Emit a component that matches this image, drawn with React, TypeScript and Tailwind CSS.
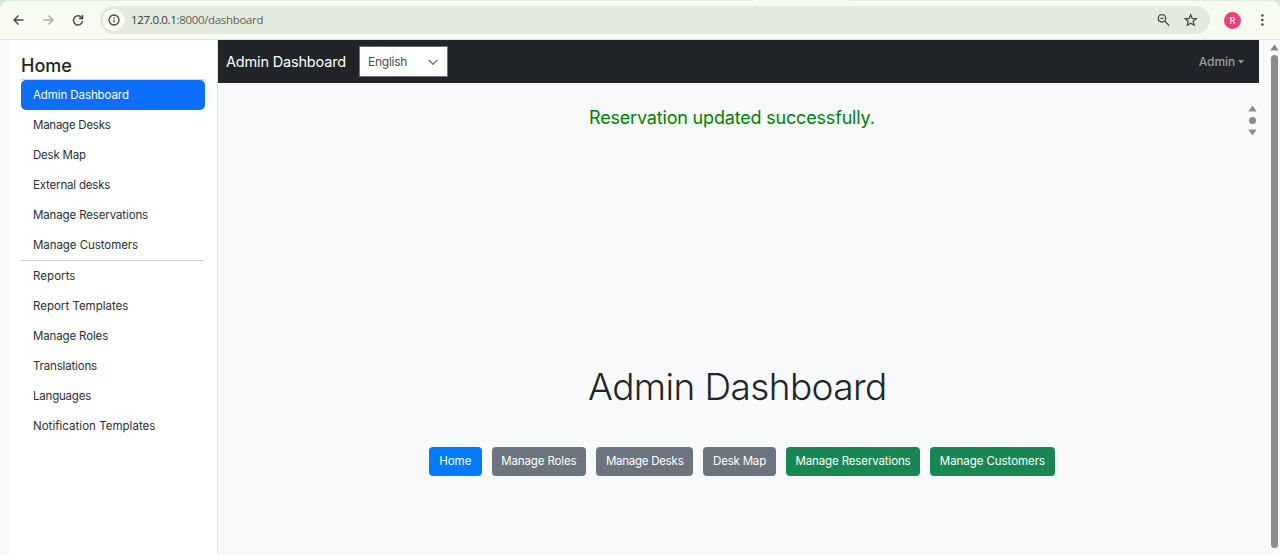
import React from 'react';

type NavItem = { label: string; track: string; active?: boolean };

const primaryNav: NavItem[] = [
  { label: 'Admin Dashboard', track: 'tracking-[-0.09px]', active: true },
  { label: 'Manage Desks', track: 'tracking-[-0.25px]' },
  { label: 'Desk Map', track: 'tracking-[-0.2px]' },
  { label: 'External desks', track: 'tracking-[-0.18px]' },
  { label: 'Manage Reservations', track: 'tracking-[-0.13px]' },
  { label: 'Manage Customers', track: 'tracking-[-0.06px]' },
];

const secondaryNav: NavItem[] = [
  { label: 'Reports', track: 'tracking-[0.05px]' },
  { label: 'Report Templates', track: 'tracking-[0px]' },
  { label: 'Manage Roles', track: 'tracking-[-0.14px]' },
  { label: 'Translations', track: 'tracking-[-0.17px]' },
  { label: 'Languages', track: 'tracking-[-0.2px]' },
  { label: 'Notification Templates', track: 'tracking-[0.03px]' },
];

const actions = [
  { label: 'Home', style: 'w-[52.5px] bg-[#007bff]' },
  { label: 'Manage Roles', style: 'w-[94.7px] bg-[#6c757d] tracking-[-0.14px]' },
  { label: 'Manage Desks', style: 'w-[97px] bg-[#6c757d] tracking-[-0.25px]' },
  { label: 'Desk Map', style: 'w-[72.7px] bg-[#6c757d] tracking-[-0.2px]' },
  { label: 'Manage Reservations', style: 'w-[134.3px] bg-[#198754] tracking-[-0.13px]' },
  { label: 'Manage Customers', style: 'w-[124.4px] bg-[#198754] tracking-[-0.06px]' },
];

function NavLink({ label, track, active }: NavItem) {
  return (
    <a
      className={`flex h-[30px] items-center rounded-[5px] pt-0.5 pl-3 text-[11.5px] whitespace-nowrap ${track} ${
        active ? 'bg-[#0d6efd] text-white' : 'text-[#2b3035]'
      }`}
    >
      {label}
    </a>
  );
}

function BrowserBar() {
  return (
    <div className="h-10 shrink-0 bg-[#d5ecd0]">
      <div className="relative flex h-10 items-center rounded-t-[9px] border-t border-b border-t-[#deefd9] border-b-[#e2e7db] bg-[#f8fbf1] text-[#454a44]">
        <div className="absolute -top-px left-[754px] h-px w-24 bg-[#f8fbf1]" />
        <svg className="ml-3 h-3.5 w-3.5" viewBox="0 0 14 14" fill="none" stroke="currentColor" strokeWidth="1.4">
          <path d="M11.5 7H2.3M6.5 2.6 2.1 7l4.4 4.4" />
        </svg>
        <svg className="ml-4 h-3.5 w-3.5 text-[#a9aea6]" viewBox="0 0 14 14" fill="none" stroke="currentColor" strokeWidth="1.4">
          <path d="M1.5 7h9.2M6.5 2.6 10.9 7l-4.4 4.4" />
        </svg>
        <svg className="ml-[15px] h-3.5 w-3.5" viewBox="0 0 14 14" fill="none" stroke="currentColor" strokeWidth="1.4">
          <path d="M11.1 5.2A4.6 4.6 0 1 0 11.6 7.9" />
          <path d="M11.6 1.9v3.6H8" />
        </svg>
        <div className="ml-[15px] flex h-7 w-[1110px] items-center rounded-full bg-[#e3ebdf]">
          <div className="ml-[3px] flex h-[22px] w-[22px] items-center justify-center rounded-full bg-[#f8fbf1]">
            <svg className="h-3 w-3" viewBox="0 0 12 12" fill="none" stroke="currentColor" strokeWidth="1.3">
              <circle cx="6" cy="6" r="5" />
              <path d="M6 5.4v3.1M6 3.2v1.2" />
            </svg>
          </div>
          <span className="ml-1.5 flex-1 font-['Open_Sans',sans-serif] text-[11.5px] tracking-[-0.33px] text-[#5b6359]">
            <span className="text-[#343a33]">127.0.0.1</span>:8000/dashboard
          </span>
          <svg className="h-3.5 w-3.5" viewBox="0 0 14 14" fill="none" stroke="currentColor" strokeWidth="1.3">
            <circle cx="5" cy="5.4" r="3.7" />
            <path d="m7.8 8.2 4.4 4.4M3.3 5.4h3.4" />
          </svg>
          <svg className="mr-3 ml-[13px] h-3.5 w-3.5" viewBox="0 0 14 14" fill="none" stroke="currentColor" strokeWidth="1.3">
            <path d="m6.7 1.8 1.55 3.6 3.9.35-2.95 2.6.88 3.85L6.7 10.15 3.32 12.2l.88-3.85-2.95-2.6 3.9-.35z" />
          </svg>
        </div>
        <div className="ml-3.5 flex h-[17px] w-[17px] items-center justify-center rounded-full bg-[#ec407a] pt-0.5 font-['Roboto',sans-serif] text-[9px] leading-none text-white">
          R
        </div>
        <svg className="ml-[15px] h-3.5 w-3" viewBox="0 0 12 14" fill="currentColor">
          <circle cx="6.4" cy="2.5" r="1.25" />
          <circle cx="6.4" cy="7" r="1.25" />
          <circle cx="6.4" cy="11.5" r="1.25" />
        </svg>
      </div>
    </div>
  );
}

export default function App() {
  return (
    <div className="flex h-[555px] w-[1280px] flex-col overflow-hidden bg-[#f8f9fb] font-['Inter',sans-serif]">
      <BrowserBar />
      <div className="flex min-h-0 flex-1">
        <aside className="ml-[9px] w-[209px] shrink-0 border-r border-r-[#e1e3e5] bg-white pr-3 pl-3">
          <h2 className="flex h-[39px] items-end pb-px text-[18px] leading-[24px] font-medium text-[#212529]">Home</h2>
          <div className="h-px bg-[#d3d4d5]" />
          <nav>
            {primaryNav.map((item) => (
              <NavLink key={item.label} {...item} />
            ))}
            <div className="h-px bg-[#d0d1d2]" />
            {secondaryNav.map((item) => (
              <NavLink key={item.label} {...item} />
            ))}
          </nav>
        </aside>
        <main className="flex w-[1041px] shrink-0 flex-col">
          <header className="flex h-[43px] shrink-0 items-center bg-[#212529] pr-[15px] pl-2">
            <span className="w-[133px] text-[14.5px] tracking-[-0.17px] whitespace-nowrap text-white">Admin Dashboard</span>
            <div className="flex h-[31px] w-[89px] items-center justify-between border border-[#6b7280] bg-white pr-[9px] pl-2 text-[12px] tracking-[-0.25px] text-[#454b52]">
              English
              <svg className="h-2.5 w-2.5" viewBox="0 0 10 10" fill="none" stroke="#6b7280" strokeWidth="1.3" strokeLinecap="round" strokeLinejoin="round">
                <path d="m1 3.2 4 4 4-4" />
              </svg>
            </div>
            <div className="ml-auto flex items-center gap-[3px] text-[12px] font-medium tracking-[-0.1px] text-[#9b9d9f]">
              Admin
              <svg className="h-1 w-1.5" viewBox="0 0 6 4" fill="currentColor">
                <path d="M0 .3h6L3 3.5z" />
              </svg>
            </div>
          </header>
          <div className="flex h-[68px] shrink-0 items-center pl-[371px]">
            <p className="text-[18px] tracking-[-0.18px] whitespace-nowrap text-[#008000]">Reservation updated successfully.</p>
            <div className="mt-1.5 ml-auto flex h-[38px] w-[13px] flex-col items-center justify-center gap-[5px] bg-[#fbfbfc]">
              <svg className="h-[7px] w-[9px]" viewBox="0 0 9 7" fill="#8b8b8b"><path d="M4.5.5 8.7 6.6H.3z" /></svg>
              <div className="h-[7px] w-[7px] rounded-full bg-[#8b8b8b]" />
              <svg className="h-[7px] w-[9px]" viewBox="0 0 9 7" fill="#8b8b8b"><path d="M4.5 6.5.3.4h8.4z" /></svg>
            </div>
          </div>
          <h1 className="mt-[211px] pl-[370px] text-[37px] leading-[50px] font-[350] tracking-[-0.6px] whitespace-nowrap text-[#212529]">
            Admin Dashboard
          </h1>
          <div className="mt-[35px] flex gap-[10px] pl-[211px]">
            {actions.map((action) => (
              <button
                key={action.label}
                className={`flex h-[29px] shrink-0 items-center justify-center rounded-[4px] pt-px text-[11.5px] whitespace-nowrap text-white ${action.style}`}
              >
                {action.label}
              </button>
            ))}
          </div>
        </main>
        <div className="ml-auto flex w-[11px] shrink-0 flex-col items-center bg-[#fbfbfc] pt-1">
          <svg className="h-[7px] w-[9px]" viewBox="0 0 9 7" fill="#8b8b8b"><path d="M4.5.3 8.8 6.6H.2z" /></svg>
          <div className="mt-1 h-[493px] w-[7px] rounded-full bg-[#8b8b8b]" />
        </div>
      </div>
    </div>
  );
}
